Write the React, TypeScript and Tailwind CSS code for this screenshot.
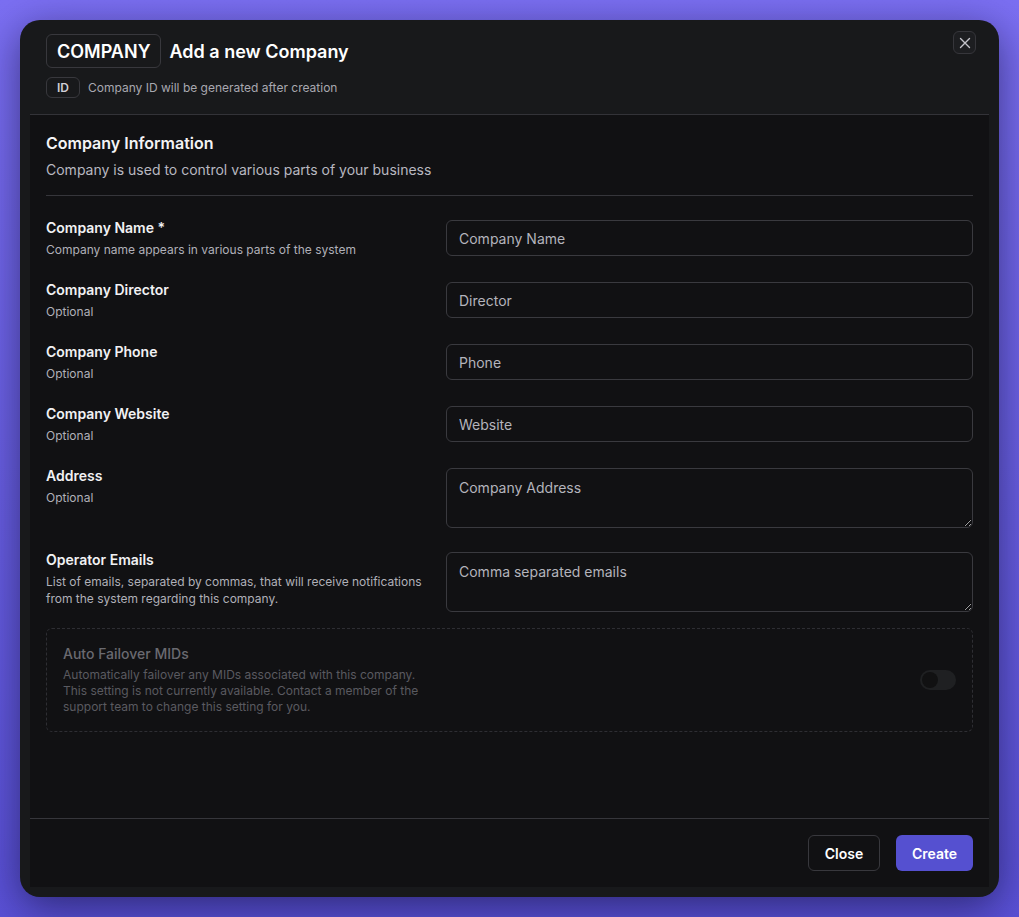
import React from "react";

function Row({ label, desc, placeholder, textarea }: { label: string; desc: React.ReactNode; placeholder: string; textarea?: boolean }) {
  return (
    <div className="flex gap-4 items-start">
      <div className="w-[384px] shrink-0">
        <div className="text-[14px] leading-[20px] font-semibold text-[#f1f1f3]">{label}</div>
        <div className="mt-[3px] text-[12px] leading-[17px] text-[#b0b0b8]">{desc}</div>
      </div>
      {textarea ? (
        <textarea
          placeholder={placeholder}
          className="mt-[2px] flex-1 h-[60px] rounded-[6px] border border-[#3a3a3f] bg-[#111113] px-[12px] py-[9px] text-[14px] leading-[20px] text-white placeholder:text-[#b4b4bc] outline-none resize-y"
        />
      ) : (
        <input
          placeholder={placeholder}
          className="mt-[2px] flex-1 h-[36px] rounded-[6px] border border-[#3a3a3f] bg-[#111113] px-[12px] text-[14px] text-white placeholder:text-[#b4b4bc] outline-none"
        />
      )}
    </div>
  );
}

export default function App() {
  return (
    <div
      className="w-[1019px] h-[917px] p-[20px] bg-gradient-to-b from-[#7b6ff2] to-[#5a51d6]"
      style={{ fontFamily: "Inter, 'Noto Sans', sans-serif" }}
    >
      <div className="w-full h-full rounded-[20px] bg-[#18191b] shadow-[0_10px_40px_rgba(10,8,40,0.55)] flex flex-col px-[10px] pb-[10px]">
        {/* Header */}
        <div className="relative h-[94px] shrink-0 px-[16px] pt-[14px]">
          <div className="flex items-center gap-[8px]">
            <span className="h-[34px] px-[10px] flex items-center rounded-[6px] border border-[#38383d] text-[18px] font-semibold text-white">
              COMPANY
            </span>
            <span className="text-[18px] font-semibold text-white">Add a new Company</span>
          </div>
          <div className="mt-[9px] flex items-center gap-[8px]">
            <span className="h-[21px] w-[34px] flex items-center justify-center rounded-[6px] border border-[#38383d] text-[12px] font-semibold text-[#d0d0d6]">
              ID
            </span>
            <span className="text-[12px] text-[#a8a8b0]">Company ID will be generated after creation</span>
          </div>
          <button className="absolute right-[13px] top-[11px] w-[23px] h-[23px] rounded-[6px] border border-[#36363b] bg-[#1d1e21] flex items-center justify-center">
            <svg width="12" height="12" viewBox="0 0 12 12" fill="none" stroke="#c4c4ca" strokeWidth="1.4" strokeLinecap="round">
              <path d="M1.5 1.5 L10.5 10.5 M10.5 1.5 L1.5 10.5" />
            </svg>
          </button>
        </div>

        {/* Body */}
        <div className="flex-1 flex flex-col bg-[#111113] border-t border-[#333338]">
          <div className="flex-1 px-[16px] pt-[17px]">
            <div className="text-[16px] leading-[22px] font-semibold text-[#f3f3f5]">Company Information</div>
            <div className="mt-[6px] text-[14px] leading-[20px] text-[#b8b8c0]">
              Company is used to control various parts of your business
            </div>
            <div className="mt-[15px] border-t border-[#36363b]" />
            <div className="mt-[22px] flex flex-col gap-[22px]">
              <Row label="Company Name *" desc="Company name appears in various parts of the system" placeholder="Company Name" />
              <Row label="Company Director" desc="Optional" placeholder="Director" />
              <Row label="Company Phone" desc="Optional" placeholder="Phone" />
              <Row label="Company Website" desc="Optional" placeholder="Website" />
              <Row label="Address" desc="Optional" placeholder="Company Address" textarea />
              <Row
                label="Operator Emails"
                desc={
                  <>
                    List of emails, separated by commas, that will receive notifications
                    <br />
                    from the system regarding this company.
                  </>
                }
                placeholder="Comma separated emails"
                textarea
              />
            </div>
            <div className="mt-[16px] h-[104px] rounded-[6px] border border-dashed border-[#2e2e33] px-[16px] pt-[15px] flex items-start justify-between">
              <div>
                <div className="text-[14px] leading-[20px] font-medium text-[#6a6a70]">Auto Failover MIDs</div>
                <div className="mt-[3px] text-[12px] leading-[16px] text-[#5a5a60]">
                  Automatically failover any MIDs associated with this company.
                  <br />
                  This setting is not currently available. Contact a member of the
                  <br />
                  support team to change this setting for you.
                </div>
              </div>
              <div className="mt-[26px] w-[36px] h-[20px] rounded-full bg-[#1f2022] flex items-center px-[2px]">
                <div className="w-[16px] h-[16px] rounded-full bg-[#111112]" />
              </div>
            </div>
          </div>

          {/* Footer */}
          <div className="border-t border-[#36363b] px-[16px] py-[16px] flex justify-end gap-[16px]">
            <button className="h-[36px] w-[72px] rounded-[6px] border border-[#38383d] bg-[#111113] text-[14px] font-semibold text-white">
              Close
            </button>
            <button className="h-[36px] w-[77px] rounded-[6px] bg-[#5550d0] text-[14px] font-semibold text-white">
              Create
            </button>
          </div>
        </div>
      </div>
    </div>
  );
}
